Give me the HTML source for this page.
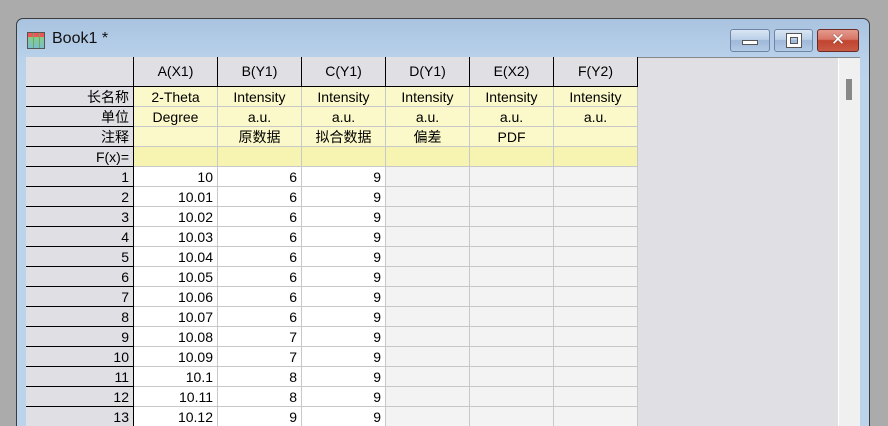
<!DOCTYPE html>
<html><head><meta charset="utf-8"><style>
*{margin:0;padding:0;box-sizing:border-box}
html,body{width:888px;height:426px;overflow:hidden}
body{background:#ababab;position:relative;font-family:"Liberation Sans","Noto Sans CJK SC",sans-serif;font-size:14px;color:#000}
.win{position:absolute;left:16px;top:18px;width:854px;height:410px;border:1px solid #3c3c3c;border-radius:7px 7px 0 0;background:linear-gradient(#a9c3e0 0,#b9d1ea 40px,#bcd3ec 60px);}
.title{position:absolute;top:30px;font-size:16px;color:#111}
.ic{position:absolute;left:27px;top:32px;width:18px;height:17px;border:1px solid #555;background:
linear-gradient(90deg,transparent 5px,#6a6 5px,#6a6 6px,transparent 6px,transparent 11px,#6a6 11px,#6a6 12px,transparent 12px),
linear-gradient(#e55 0,#e55 4px,#8c8 4px,#7bd 17px)}
.btn{position:absolute;top:29px;height:23px;border:1px solid #6e85a5;border-radius:3px;background:linear-gradient(#d9e5f3 0,#bcd0e8 45%,#9fb8d8 50%,#b4cae6 100%)}
.close{border-color:#6b2a24;background:linear-gradient(#e59a8e 0,#d77465 45%,#c1442f 50%,#c85a45 100%)}
.client{position:absolute;left:26px;top:57px;width:834px;height:369px;background:#e0dfe4;border-top:1px solid #888}
.sb{position:absolute;left:838px;top:58px;width:22px;height:368px;background:#f0f0f0;border-left:1px solid #fff}
.thumb{position:absolute;left:846px;top:79px;width:6px;height:21px;background:#888}
.c{position:absolute;height:20px;line-height:20px;white-space:nowrap;padding:0 4px;font-size:14px}
.rh{background:#e0dfe4;border-right:1px solid #000;border-bottom:1px solid #000;text-align:right}
.y{background:#fbf9c9;border-right:1px solid #c8c8c8;border-bottom:1px solid #c8c8c8;text-align:center}
.f{background:#f6f4b0}
.w{background:#fff;border-right:1px solid #c8c8c8;border-bottom:1px solid #c8c8c8;text-align:right}
.g{background:#f3f3f3;border-right:1px solid #c8c8c8;border-bottom:1px solid #c8c8c8}
.h{background:#e0dfe4;border-right:1px solid #000;border-bottom:1px solid #000;text-align:center;line-height:28px;height:30px}
</style></head><body>
<div class="win"></div>
<div class="ic"></div>
<div class="title" style="left:52px">Book1 *</div>
<div class="btn" style="left:730px;width:40px"><div style="position:absolute;left:11px;top:10px;width:16px;height:5px;background:#fff;border:1px solid #555"></div></div>
<div class="btn" style="left:774px;width:39px"><div style="position:absolute;left:12px;top:4px;width:14px;height:13px;border:3px solid #fff;box-shadow:0 0 0 1px #555, inset 0 0 0 1px #555"></div></div>
<div class="btn close" style="left:817px;width:42px"><div style="position:absolute;left:0;top:0;width:40px;text-align:center;color:#fff;font-weight:bold;font-size:17px;line-height:21px;font-family:'DejaVu Sans',sans-serif;text-shadow:0 0 1px #333">✕</div></div>
<div class="client"></div>
<div class="sb"></div><div class="thumb"></div>
<div>
<div class="c h" style="left:26px;top:57px;width:108px"></div>
<div class="c h" style="left:134px;top:57px;width:84px">A(X1)</div>
<div class="c h" style="left:218px;top:57px;width:84px">B(Y1)</div>
<div class="c h" style="left:302px;top:57px;width:84px">C(Y1)</div>
<div class="c h" style="left:386px;top:57px;width:84px">D(Y1)</div>
<div class="c h" style="left:470px;top:57px;width:84px">E(X2)</div>
<div class="c h" style="left:554px;top:57px;width:84px">F(Y2)</div>
</div>
<div style="position:absolute;left:0;top:0">
<div class="c rh" style="left:26px;top:87px;width:108px">长名称</div>
<div class="c y" style="left:134px;top:87px;width:84px">2-Theta</div>
<div class="c y" style="left:218px;top:87px;width:84px">Intensity</div>
<div class="c y" style="left:302px;top:87px;width:84px">Intensity</div>
<div class="c y" style="left:386px;top:87px;width:84px">Intensity</div>
<div class="c y" style="left:470px;top:87px;width:84px">Intensity</div>
<div class="c y" style="left:554px;top:87px;width:84px">Intensity</div>
<div class="c rh" style="left:26px;top:107px;width:108px">单位</div>
<div class="c y" style="left:134px;top:107px;width:84px">Degree</div>
<div class="c y" style="left:218px;top:107px;width:84px">a.u.</div>
<div class="c y" style="left:302px;top:107px;width:84px">a.u.</div>
<div class="c y" style="left:386px;top:107px;width:84px">a.u.</div>
<div class="c y" style="left:470px;top:107px;width:84px">a.u.</div>
<div class="c y" style="left:554px;top:107px;width:84px">a.u.</div>
<div class="c rh" style="left:26px;top:127px;width:108px">注释</div>
<div class="c y" style="left:134px;top:127px;width:84px"></div>
<div class="c y" style="left:218px;top:127px;width:84px">原数据</div>
<div class="c y" style="left:302px;top:127px;width:84px">拟合数据</div>
<div class="c y" style="left:386px;top:127px;width:84px">偏差</div>
<div class="c y" style="left:470px;top:127px;width:84px">PDF</div>
<div class="c y" style="left:554px;top:127px;width:84px"></div>
<div class="c rh" style="left:26px;top:147px;width:108px">F(x)=</div>
<div class="c y f" style="left:134px;top:147px;width:84px"></div>
<div class="c y f" style="left:218px;top:147px;width:84px"></div>
<div class="c y f" style="left:302px;top:147px;width:84px"></div>
<div class="c y f" style="left:386px;top:147px;width:84px"></div>
<div class="c y f" style="left:470px;top:147px;width:84px"></div>
<div class="c y f" style="left:554px;top:147px;width:84px"></div>
</div>
<div style="position:absolute;left:0;top:0">
<div class="c rh" style="left:26px;top:167px;width:108px">1</div><div class="c w" style="left:134px;top:167px;width:84px">10</div><div class="c w" style="left:218px;top:167px;width:84px">6</div><div class="c w" style="left:302px;top:167px;width:84px">9</div><div class="c g" style="left:386px;top:167px;width:84px"></div><div class="c g" style="left:470px;top:167px;width:84px"></div><div class="c g" style="left:554px;top:167px;width:84px"></div>
<div class="c rh" style="left:26px;top:187px;width:108px">2</div><div class="c w" style="left:134px;top:187px;width:84px">10.01</div><div class="c w" style="left:218px;top:187px;width:84px">6</div><div class="c w" style="left:302px;top:187px;width:84px">9</div><div class="c g" style="left:386px;top:187px;width:84px"></div><div class="c g" style="left:470px;top:187px;width:84px"></div><div class="c g" style="left:554px;top:187px;width:84px"></div>
<div class="c rh" style="left:26px;top:207px;width:108px">3</div><div class="c w" style="left:134px;top:207px;width:84px">10.02</div><div class="c w" style="left:218px;top:207px;width:84px">6</div><div class="c w" style="left:302px;top:207px;width:84px">9</div><div class="c g" style="left:386px;top:207px;width:84px"></div><div class="c g" style="left:470px;top:207px;width:84px"></div><div class="c g" style="left:554px;top:207px;width:84px"></div>
<div class="c rh" style="left:26px;top:227px;width:108px">4</div><div class="c w" style="left:134px;top:227px;width:84px">10.03</div><div class="c w" style="left:218px;top:227px;width:84px">6</div><div class="c w" style="left:302px;top:227px;width:84px">9</div><div class="c g" style="left:386px;top:227px;width:84px"></div><div class="c g" style="left:470px;top:227px;width:84px"></div><div class="c g" style="left:554px;top:227px;width:84px"></div>
<div class="c rh" style="left:26px;top:247px;width:108px">5</div><div class="c w" style="left:134px;top:247px;width:84px">10.04</div><div class="c w" style="left:218px;top:247px;width:84px">6</div><div class="c w" style="left:302px;top:247px;width:84px">9</div><div class="c g" style="left:386px;top:247px;width:84px"></div><div class="c g" style="left:470px;top:247px;width:84px"></div><div class="c g" style="left:554px;top:247px;width:84px"></div>
<div class="c rh" style="left:26px;top:267px;width:108px">6</div><div class="c w" style="left:134px;top:267px;width:84px">10.05</div><div class="c w" style="left:218px;top:267px;width:84px">6</div><div class="c w" style="left:302px;top:267px;width:84px">9</div><div class="c g" style="left:386px;top:267px;width:84px"></div><div class="c g" style="left:470px;top:267px;width:84px"></div><div class="c g" style="left:554px;top:267px;width:84px"></div>
<div class="c rh" style="left:26px;top:287px;width:108px">7</div><div class="c w" style="left:134px;top:287px;width:84px">10.06</div><div class="c w" style="left:218px;top:287px;width:84px">6</div><div class="c w" style="left:302px;top:287px;width:84px">9</div><div class="c g" style="left:386px;top:287px;width:84px"></div><div class="c g" style="left:470px;top:287px;width:84px"></div><div class="c g" style="left:554px;top:287px;width:84px"></div>
<div class="c rh" style="left:26px;top:307px;width:108px">8</div><div class="c w" style="left:134px;top:307px;width:84px">10.07</div><div class="c w" style="left:218px;top:307px;width:84px">6</div><div class="c w" style="left:302px;top:307px;width:84px">9</div><div class="c g" style="left:386px;top:307px;width:84px"></div><div class="c g" style="left:470px;top:307px;width:84px"></div><div class="c g" style="left:554px;top:307px;width:84px"></div>
<div class="c rh" style="left:26px;top:327px;width:108px">9</div><div class="c w" style="left:134px;top:327px;width:84px">10.08</div><div class="c w" style="left:218px;top:327px;width:84px">7</div><div class="c w" style="left:302px;top:327px;width:84px">9</div><div class="c g" style="left:386px;top:327px;width:84px"></div><div class="c g" style="left:470px;top:327px;width:84px"></div><div class="c g" style="left:554px;top:327px;width:84px"></div>
<div class="c rh" style="left:26px;top:347px;width:108px">10</div><div class="c w" style="left:134px;top:347px;width:84px">10.09</div><div class="c w" style="left:218px;top:347px;width:84px">7</div><div class="c w" style="left:302px;top:347px;width:84px">9</div><div class="c g" style="left:386px;top:347px;width:84px"></div><div class="c g" style="left:470px;top:347px;width:84px"></div><div class="c g" style="left:554px;top:347px;width:84px"></div>
<div class="c rh" style="left:26px;top:367px;width:108px">11</div><div class="c w" style="left:134px;top:367px;width:84px">10.1</div><div class="c w" style="left:218px;top:367px;width:84px">8</div><div class="c w" style="left:302px;top:367px;width:84px">9</div><div class="c g" style="left:386px;top:367px;width:84px"></div><div class="c g" style="left:470px;top:367px;width:84px"></div><div class="c g" style="left:554px;top:367px;width:84px"></div>
<div class="c rh" style="left:26px;top:387px;width:108px">12</div><div class="c w" style="left:134px;top:387px;width:84px">10.11</div><div class="c w" style="left:218px;top:387px;width:84px">8</div><div class="c w" style="left:302px;top:387px;width:84px">9</div><div class="c g" style="left:386px;top:387px;width:84px"></div><div class="c g" style="left:470px;top:387px;width:84px"></div><div class="c g" style="left:554px;top:387px;width:84px"></div>
<div class="c rh" style="left:26px;top:407px;width:108px">13</div><div class="c w" style="left:134px;top:407px;width:84px">10.12</div><div class="c w" style="left:218px;top:407px;width:84px">9</div><div class="c w" style="left:302px;top:407px;width:84px">9</div><div class="c g" style="left:386px;top:407px;width:84px"></div><div class="c g" style="left:470px;top:407px;width:84px"></div><div class="c g" style="left:554px;top:407px;width:84px"></div>
</div>
</body></html>
